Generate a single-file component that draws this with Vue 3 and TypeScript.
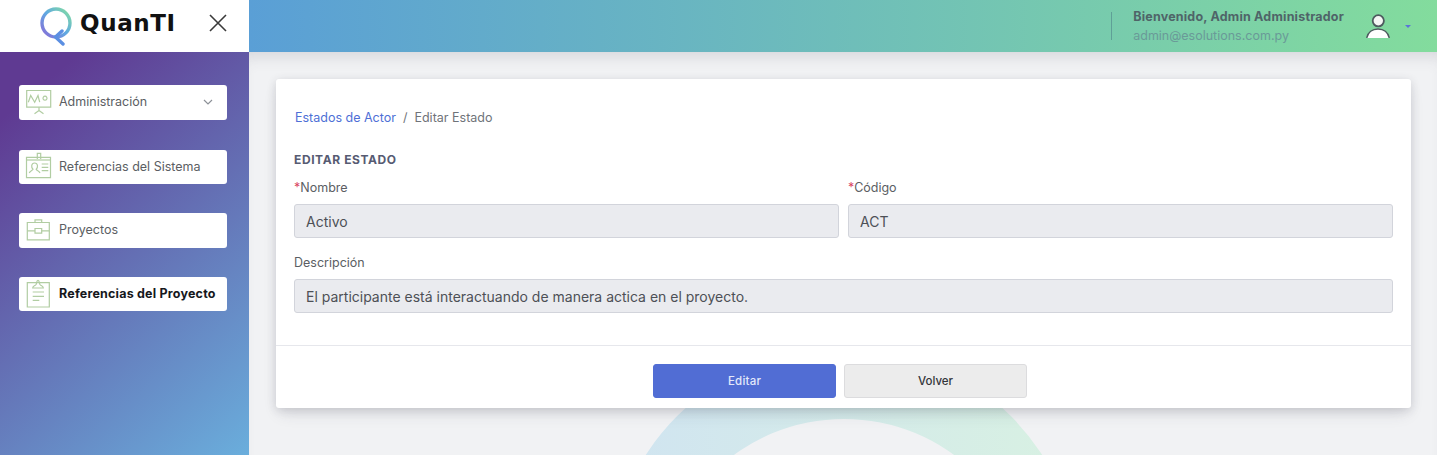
<template>
  <div class="layout">
    <aside class="sidebar">
      <div class="brand">
        <svg class="brand-mark" width="34" height="40" viewBox="0 0 34 40" fill="none">
          <defs>
            <linearGradient id="ring" x1="0" y1="1" x2="1" y2="0">
              <stop offset="0" stop-color="#8a6ad6" />
              <stop offset="0.5" stop-color="#5fa8e2" />
              <stop offset="1" stop-color="#84e0a0" />
            </linearGradient>
          </defs>
          <circle cx="17" cy="17" r="14" stroke="url(#ring)" stroke-width="3.4" />
          <path d="M23 25l-6.500 6 7.500 7" stroke="#5b8fe2" stroke-width="3.400" stroke-linecap="round" stroke-linejoin="round" />
        </svg>
        <span class="brand-name">QuanTI</span>
        <svg class="brand-close" width="18" height="18" viewBox="0 0 18 18" fill="none">
          <path d="M1 1l16 16M17 1L1 17" stroke="#3a3a3a" stroke-width="1.6" />
        </svg>
      </div>
      <nav class="menu">
        <a v-for="item in menu" :key="item.label" class="menu-item" :class="{ active: item.active }">
          <svg class="menu-icon" width="26" height="26" viewBox="0 0 26 26" fill="none" stroke="#b1cda2" stroke-width="1.200">
            <path v-for="d in item.icon" :key="d" :d="d" />
          </svg>
          <span class="menu-label">{{ item.label }}</span>
          <svg v-if="item.chevron" class="menu-chevron" width="10" height="6" viewBox="0 0 10 6" fill="none">
            <path d="M1 1l4 4 4-4" stroke="#8d9198" stroke-width="1.2" />
          </svg>
        </a>
      </nav>
    </aside>

    <div class="body">
      <header class="topbar">
        <div class="user-text">
          <strong>Bienvenido, Admin Administrador</strong>
          <span>admin@esolutions.com.py</span>
        </div>
        <svg class="user-icon" width="24" height="24" viewBox="0 0 24 24" fill="none">
          <circle cx="12.300" cy="6.800" r="5.600" fill="#f4f6f4" stroke="#4d5a5e" stroke-width="1.800" />
          <path d="M.7 24c1.200-5.500 5.700-9 11.300-9s10.100 3.500 11.300 9z" fill="#fff" />
          <path d="M.7 24c1.200-5.500 5.700-9 11.300-9s10.100 3.500 11.300 9" stroke="#4d5a5e" stroke-width="1.500" />
        </svg>
        <span class="user-caret"></span>
      </header>

      <main class="content">
        <svg class="watermark" width="500" height="108" viewBox="0 0 500 108">
          <defs>
            <linearGradient id="wm" x1="0" y1="0" x2="1" y2="0">
              <stop offset="0" stop-color="#d0e4f1" />
              <stop offset="1" stop-color="#d8f1e2" />
            </linearGradient>
          </defs>
          <path fill="url(#wm)" fill-rule="evenodd" d="M14 236a236 236 0 1 1 472 0a236 236 0 1 1-472 0zM64 258a186 186 0 1 0 372 0a186 186 0 1 0-372 0z" />
        </svg>

        <section class="card">
          <div class="card-body">
            <div class="crumbs">
              <a>Estados de Actor</a>
              <span class="sep">/</span>
              <span>Editar Estado</span>
            </div>
            <h2>EDITAR ESTADO</h2>
            <div class="row">
              <label class="field">
                <span class="field-label"><i>*</i>Nombre</span>
                <input value="Activo" disabled />
              </label>
              <label class="field">
                <span class="field-label"><i>*</i>Código</span>
                <input value="ACT" disabled />
              </label>
            </div>
            <label class="field">
              <span class="field-label">Descripción</span>
              <input value="El participante está interactuando de manera actica en el proyecto." disabled />
            </label>
          </div>
          <div class="card-footer">
            <button class="btn primary">Editar</button>
            <button class="btn">Volver</button>
          </div>
        </section>
      </main>
    </div>
  </div>
</template>

<script setup lang="ts">
interface MenuItem {
  label: string
  icon: string[]
  chevron?: boolean
  active?: boolean
}

const menu: MenuItem[] = [
  {
    label: 'Administración',
    chevron: true,
    icon: [
      'M.7 .5h24v16.700H.7z',
      'M2.300 12.200l2.400-6.700 4 6.700 3.300-6.700 1.700 6.700',
      'M19 6.200a2 2 0 1 1-.01 0',
      'M13 17.200v3.300M13 20.500l-4.500 3.300M13 20.500l4.500 3.300'
    ]
  },
  {
    label: 'Referencias del Sistema',
    icon: [
      'M.5 3.300h24v20.400H.5z',
      'M.5 6h24',
      'M11.300 5V-.7h3.400V5',
      'M3.300 19c.6-2.300 3-2.100 3.700-3.700-2-1.800-1.900-6.300 1.600-6.300s3.600 4.500 1.600 6.300c.7 1.600 3.100 1.400 3.800 3.700',
      'M15.700 10h6.600M15.700 13.300h6.600M15.700 16.700h6.600'
    ]
  },
  {
    label: 'Proyectos',
    icon: [
      'M1.300 4.500h22v17.300h-22z',
      'M9 4.500V1.800h6.700v2.700',
      'M1.300 12.800H9M15.700 12.800h7.600',
      'M9 10.500h6.700v4.700H9z'
    ]
  },
  {
    label: 'Referencias del Proyecto',
    active: true,
    icon: [
      'M1.300 1.700h22V26h-22z',
      'M6.700 7h10.600c0-2.400-2.400-1.800-3.500-3.700C13.400 2.200 13.400-.7 12-.7s-1.400 2.900-1.800 4C9.100 5.200 6.700 4.600 6.700 7z',
      'M6.700 11h11.300M6.700 15.300h11.300M6.700 19.300h6.600'
    ]
  }
]
</script>

<style scoped>
.layout {
  display: flex;
  height: 455px;
  overflow: hidden;
  font-family: Inter, "Liberation Sans", sans-serif;
}

.sidebar {
  width: 249px;
  flex-shrink: 0;
  display: flex;
  flex-direction: column;
  background: linear-gradient(140deg, #5f3a92 18%, #6aaedc 100%);
}

.brand {
  height: 52px;
  box-sizing: border-box;
  padding: 0 0 6px 39px;
  background: #fff;
  display: flex;
  align-items: center;
}

.brand-mark {
  margin-top: 5px;
}

.brand-name {
  margin-left: 7px;
  font-family: "DejaVu Sans", sans-serif;
  font-size: 23px;
  font-weight: 700;
  color: #111;
  letter-spacing: 0.6px;
}

.brand-close {
  margin-left: 33px;
}

.menu {
  display: flex;
  flex-direction: column;
  gap: 29px;
  padding: 33px 22px 0 19px;
}

.menu-item {
  height: 35px;
  display: flex;
  align-items: center;
  background: #fff;
  border-radius: 3px;
  padding-left: 7px;
  font-size: 12.500px;
  color: #5b5e63;
}

.menu-item:nth-child(even) {
  height: 34px;
}

.menu-item:nth-child(2) {
  margin-top: 1px;
}

.menu-item.active {
  color: #16181c;
  font-weight: 700;
  letter-spacing: 0.2px;
}

.menu-icon {
  overflow: visible;
  flex-shrink: 0;
}

.menu-label {
  margin-left: 7px;
  white-space: nowrap;
  margin-top: -1px;
}

.menu-item:nth-child(odd) .menu-label {
  margin-top: -2px;
}

.menu-chevron {
  margin-left: auto;
  margin-right: 14px;
  margin-top: -1px;
}

.body {
  flex: 1;
  min-width: 0;
  display: flex;
  flex-direction: column;
}

.topbar {
  height: 52px;
  flex-shrink: 0;
  display: flex;
  align-items: center;
  justify-content: flex-end;
  background: linear-gradient(90deg, #5a9fd6 0%, #83dc9d 100%);
  position: relative;
  z-index: 1;
}

.user-text {
  display: flex;
  flex-direction: column;
  gap: 4px;
  height: 28px;
  justify-content: center;
  border-left: 1px solid #5fa097;
  padding-left: 21px;
  font-size: 12.500px;
  color: #6a9a98;
}

.user-text strong {
  color: #4f6468;
  font-weight: 700;
  letter-spacing: 0.2px;
}

.user-icon {
  margin-left: 22px;
}

.user-caret {
  margin: 0 26px 0 15px;
  border-left: 3px solid transparent;
  border-right: 3px solid transparent;
  border-top: 3.500px solid #5a74d8;
}

.content {
  flex: 1;
  position: relative;
  background: #f1f2f4;
  box-shadow: inset 0 14px 16px -10px rgba(60, 60, 80, 0.16);
  padding: 27px 26px 0 27px;
}

.watermark {
  position: absolute;
  left: 344.500px;
  top: 295px;
}

.card {
  position: relative;
  background: #fff;
  border-radius: 3px;
  box-shadow: 0 2px 10px rgba(50, 50, 70, 0.16), 0 8px 16px -4px rgba(50, 50, 70, 0.14);
}

.card-body {
  display: flex;
  flex-direction: column;
  padding: 31px 18px 32px 18px;
  border-bottom: 1px solid #e6e7ec;
}

.crumbs {
  font-size: 12.500px;
  line-height: 15px;
  color: #6f7379;
  padding-left: 1px;
}

.crumbs a {
  color: #4e6fd6;
}

.sep {
  margin: 0 7px;
}

h2 {
  margin: 27px 0 0;
  font-size: 12px;
  line-height: 15px;
  font-weight: 700;
  color: #565b72;
  letter-spacing: 0.6px;
}

.row {
  display: flex;
  gap: 9px;
  margin-top: 13px;
}

.row + .field {
  margin-top: 17px;
}

.field {
  flex: 1;
  display: flex;
  flex-direction: column;
}

.field-label {
  font-size: 12.500px;
  line-height: 15px;
  color: #5b5e63;
  margin-bottom: 9px;
}

.field-label i {
  font-style: normal;
  color: #d9455f;
}

input {
  height: 34px;
  box-sizing: border-box;
  width: 100%;
  padding: 0 11px;
  border: 1px solid #d2d4db;
  border-radius: 3px;
  background: #eaebef;
  font: 14px Inter, "Liberation Sans", sans-serif;
  color: #4d5056;
}

.card-footer {
  display: flex;
  justify-content: center;
  gap: 8px;
  padding: 18px 7px 10px 0;
}

.btn {
  width: 183px;
  height: 34px;
  border: 1px solid #dcdcde;
  border-radius: 3px;
  background: #ececec;
  font: 500 11.500px Inter, "Liberation Sans", sans-serif;
  color: #33363b;
}

.btn.primary {
  background: #516dd4;
  border-color: #516dd4;
  color: #e3e8fa;
  letter-spacing: 0.2px;
}
</style>
